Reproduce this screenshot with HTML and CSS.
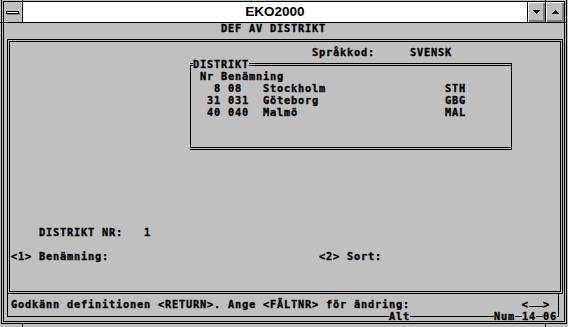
FILE: index.html
```html
<!DOCTYPE html>
<html>
<head>
    <title>EKO2000</title>
    <link rel="stylesheet" href="styles.css">
</head>
<body>
    <div class="window">
        <div class="inner">
            <div class="titlebar">
                <div class="sysmenu"><span class="sysbar"></span></div>
                <div class="caption">EKO2000</div>
                <div class="sizebtn down">
                    <svg width="7" height="4" shape-rendering="crispEdges"><path d="M0 0h7v1h-1v1h-1v1h-1v1h-1v-1h-1v-1h-1v-1h-1z"/></svg>
                </div>
                <div class="sizebtn up">
                    <svg width="7" height="4" shape-rendering="crispEdges"><path d="M3 0h1v1h1v1h1v1h1v1h-7v-1h1v-1h1v-1h1z"/></svg>
                </div>
            </div>

            <div class="screen">
                <div class="row">                               DEF AV DISTRIKT</div>

                <div class="frame">
                    <div class="row">                                           Språkkod:     SVENSK</div>

                    <div class="distrikt">
                        <div class="row legend"><span>DISTRIKT</span></div>
                        <div class="row"> Nr Benämning</div>
                        <div class="row">   8 08   Stockholm                 STH</div>
                        <div class="row">  31 031  Göteborg                  GBG</div>
                        <div class="row">  40 040  Malmö                     MAL</div>
                        <div class="row"></div>
                        <div class="row"></div>
                    </div>

                    <div class="row"></div>
                    <div class="row"></div>
                    <div class="row"></div>
                    <div class="row"></div>
                    <div class="row"></div>
                    <div class="row"></div>
                    <div class="row">    DISTRIKT NR:   1</div>
                    <div class="row"></div>
                    <div class="row">&lt;1&gt; Benämning:                              &lt;2&gt; Sort:</div>
                    <div class="row"></div>
                    <div class="row"></div>
                </div>

                <div class="status">
                    <div class="row">Godkänn definitionen &lt;RETURN&gt;. Ange &lt;FÄLTNR&gt; för ändring:                &lt;<span class="field">  </span>&gt;</div>
                    <div class="row footer">                                                      <span>Alt</span>            <span>Num</span> <span>14</span> <span>06</span></div>
                </div>
            </div>
        </div>
    </div>
</body>
</html>
```

FILE: styles.css
```css
body {
    margin: 0;
    width: 568px;
    height: 327px;
    overflow: hidden;
    background: #c0c0c0;
}

/* window frame (sizing border) */
.window {
    position: relative;
    margin: -1px 0 0 1px;
    width: 566px;
    height: 325px;
    box-sizing: border-box;
    border: 1px solid #000;
    padding: 1px;
}
/* corner marks of the sizing border */
.window::before,
.window::after {
    content: "";
    position: absolute;
    background: #000;
}
.window::before {
    left: 20px;
    top: -1px;
    width: 1px;
    height: 3px;
    box-shadow: 523px 0 #000, 0 325px #000, 523px 325px #000;
}
.window::after {
    left: -2px;
    top: 22px;
    width: 3px;
    height: 1px;
    box-shadow: 564px 0 #000;
}

.inner {
    height: 100%;
    box-sizing: border-box;
    border: 1px solid #000;
    overflow: hidden;
}

/* title bar */
.titlebar {
    display: flex;
    height: 20px;
    border-bottom: 1px solid #000;
}
.sysmenu {
    width: 18px;
    border-right: 1px solid #000;
}
.sysbar {
    display: block;
    width: 11px;
    height: 1px;
    margin: 9px 0 0 2px;
    border: 1px solid #000;
    background: #fff;
    box-shadow: 1px 1px 0 #808080;
}
.caption {
    flex: 1;
    background: #fff;
    border-right: 1px solid #000;
    font: bold 13.5px "Liberation Sans", Arial, sans-serif;
    line-height: 20px;
    text-align: center;
}
.sizebtn {
    display: flex;
    align-items: center;
    justify-content: center;
    box-shadow: inset 1px 1px #fff, inset -1px -1px #808080, inset -2px -2px #808080;
}
.sizebtn.down {
    width: 17px;
    border-right: 1px solid #000;
}
.sizebtn.up { width: 18px; }
.sizebtn svg { display: block; }

/* text mode screen, 80 x 25 cells of 7 x 12 */
.screen {
    margin-top: -1px;
    font: bold 10.3px "DejaVu Sans Mono", monospace;
    letter-spacing: 0.799px;
    line-height: 12px;
    color: #000;
    -webkit-text-stroke: 0.35px #000;
}
.row {
    height: 12px;
    white-space: pre;
}

.frame {
    width: 556px;
    box-sizing: border-box;
    margin: 5px 0 0 3px;
    padding: 4px 0 5px 1px;
    border: 3px double #000;
}

.distrikt {
    width: 322px;
    box-sizing: border-box;
    margin: 5px 0 4px 179px;
    padding: 4px 0 5px 2px;
    border-top: 3px double #000;
    border-bottom: 3px double #000;
    border-left: 1px solid #000;
    border-right: 1px solid #000;
}
.legend { margin-top: -12px; }
.legend span,
.footer span { background: #c0c0c0; }

.field {
    background: linear-gradient(#000, #000) 0 8px / 100% 1px no-repeat;
}

.status {
    width: 552px;
    box-sizing: border-box;
    margin-left: 3px;
    padding: 4px 0 0 3px;
    border-left: 1px solid #000;
    border-right: 1px solid #000;
    border-bottom: 1px solid #000;
}
.footer { margin-bottom: -6px; }
```
